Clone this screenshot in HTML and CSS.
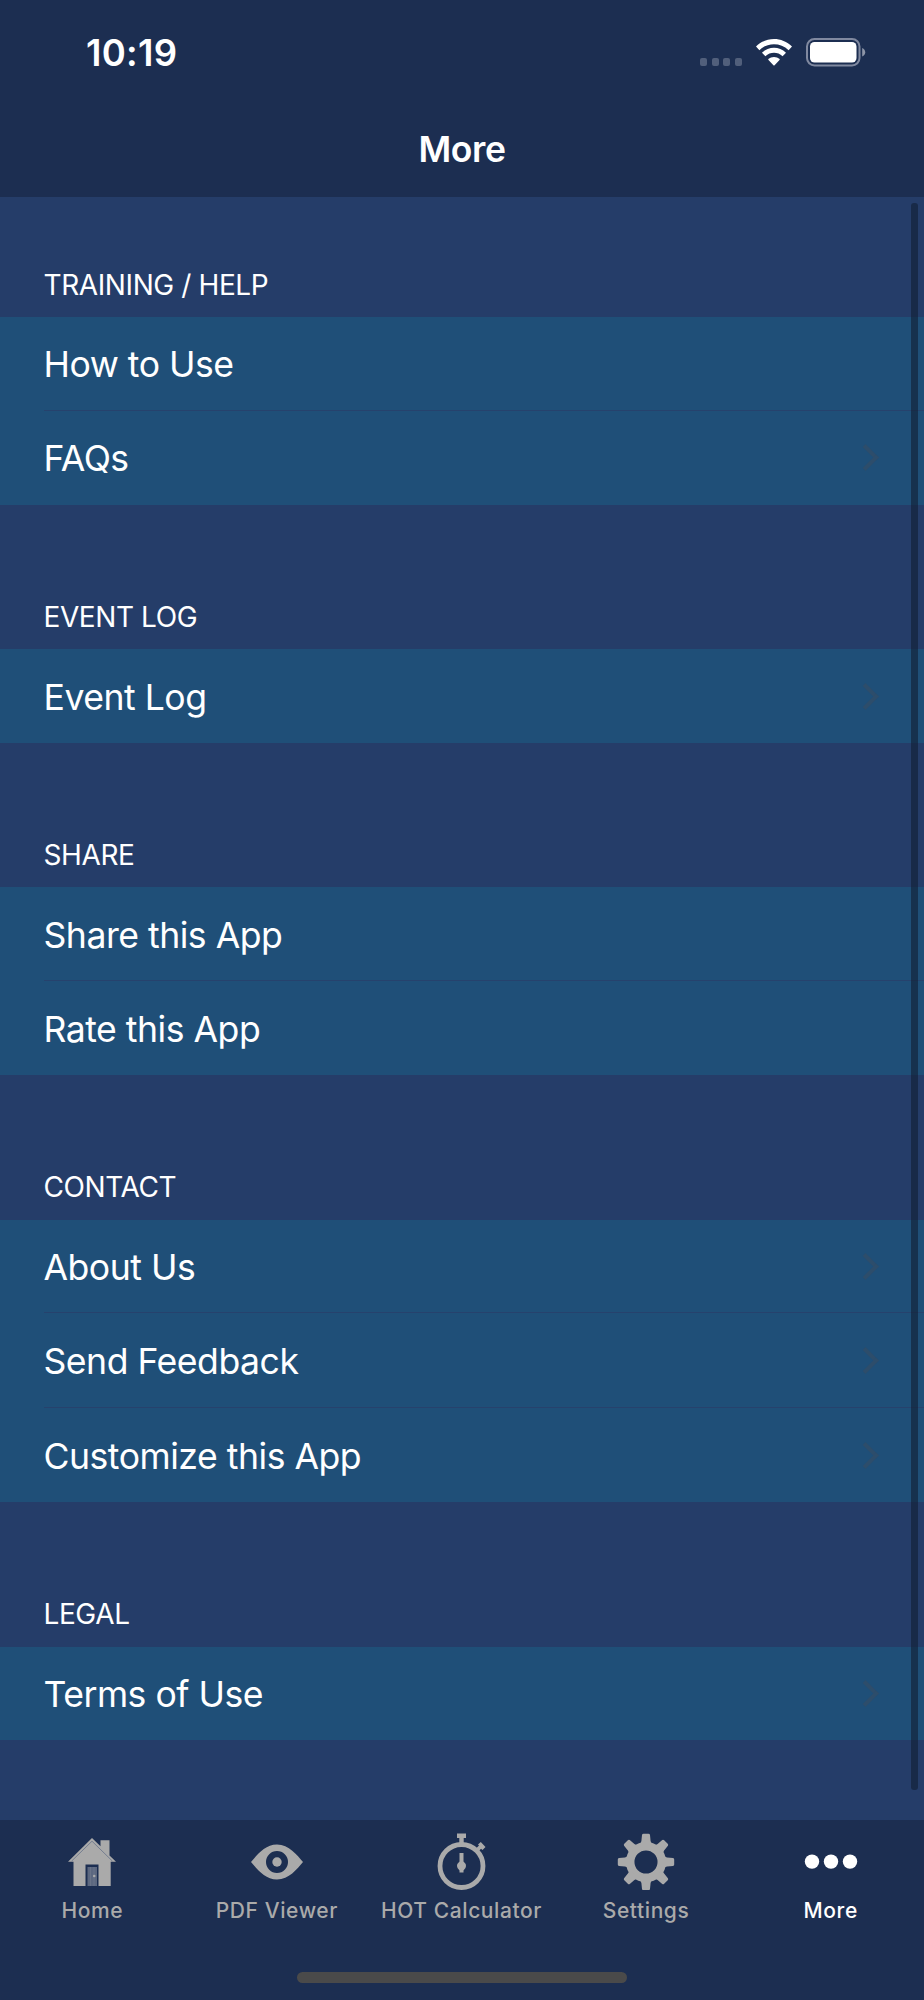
FILE: index.html
```html
<!DOCTYPE html>
<html lang="en">
<head>
  <meta charset="UTF-8">
  <title>More</title>
  <link rel="stylesheet" href="styles.css">
</head>
<body>
  <div class="screen">
    <header class="top">
      <div class="status-bar">
        <span class="time">10:19</span>
        <div class="status-icons">
          <div class="signal"><i></i><i></i><i></i><i></i></div>
          <svg class="wifi" width="36" height="27" viewBox="0 0 36 27" fill="#fff">
            <path d="M0 7.6C10 -2.5 26 -2.5 36 7.6L32.6 11.2C24.5 3.4 11.5 3.4 3.4 11.2Z"/>
            <path d="M6 13.7C12.8 7.2 23.2 7.2 30 13.7L26.6 17.2C21.7 12.7 14.3 12.7 9.4 17.2Z"/>
            <path d="M12.3 20.1C15.5 17.3 20.5 17.3 23.7 20.1Q23.9 20.6 23.5 21L18.6 26.2Q18 26.8 17.4 26.2L12.5 21Q12.1 20.6 12.3 20.1Z"/>
          </svg>
          <svg class="battery" width="60" height="29" viewBox="0 0 60 29">
            <rect x="1" y="1" width="52.5" height="26.5" rx="7.5" fill="none" stroke="#8089a0" stroke-width="2"/>
            <rect x="4" y="4" width="46.5" height="20.5" rx="4.5" fill="#fff"/>
            <path d="M56.2 10Q59.2 11.3 59.2 14.3T56.2 18.6Z" fill="#8e96a8"/>
          </svg>
        </div>
      </div>
      <h1>More</h1>
    </header>

    <main class="content">
      <section>
        <h2>TRAINING / HELP</h2>
        <ul>
          <li>How to Use</li>
          <li class="link">FAQs</li>
        </ul>
      </section>
      <section>
        <h2>EVENT LOG</h2>
        <ul>
          <li class="link">Event Log</li>
        </ul>
      </section>
      <section>
        <h2>SHARE</h2>
        <ul>
          <li>Share this App</li>
          <li>Rate this App</li>
        </ul>
      </section>
      <section>
        <h2>CONTACT</h2>
        <ul>
          <li class="link">About Us</li>
          <li class="link">Send Feedback</li>
          <li class="link">Customize this App</li>
        </ul>
      </section>
      <section>
        <h2>LEGAL</h2>
        <ul>
          <li class="link">Terms of Use</li>
        </ul>
      </section>
      <div class="scrollbar"></div>
    </main>

    <nav class="tabs">
      <a class="tab">
        <svg width="60" height="60" viewBox="0 0 60 60">
          <path d="M6 31.8L30 8L38.5 16.3V10.2H47.5V25.500L54 31.800H48.700V56H36.500V34.500H23.500V56H11.500V31.800Z" fill="#aaa"/>
          <path d="M9.5 31.2L30 11.2L50.5 31.2" fill="none" stroke="#757e90" stroke-width="1"/>
          <rect x="25.5" y="37" width="9.5" height="19" fill="#5c6880"/>
          <path d="M28.500 37V56M32 37V56" stroke="#6c768a" stroke-width=".8"/>
          <circle cx="32.2" cy="46" r="1.3" fill="#aaa"/>
        </svg>
        <span>Home</span>
      </a>
      <a class="tab">
        <svg width="60" height="60" viewBox="0 0 60 60">
          <path fill="#aaa" fill-rule="evenodd" d="M4 32C10 25 18 14.5 30 14.5S50 25 56 32C50 39 42 49.5 30 49.5S10 39 4 32ZM30 21a11 11 0 1 0 0 22a11 11 0 1 0 0-22Z"/>
          <circle cx="30" cy="32" r="4.7" fill="#aaa"/>
        </svg>
        <span>PDF Viewer</span>
      </a>
      <a class="tab">
        <svg width="60" height="60" viewBox="0 0 60 60">
          <circle cx="30.5" cy="36" r="21.5" fill="none" stroke="#aaa" stroke-width="4.8"/>
          <path fill="#aaa" d="M26 3.5H35V8H32.7V14H28.3V8H26ZM44.500 19L48 15.500L47 14.500L49.800 12L54.500 17L51.500 20L50 18.700L46.500 22.500ZM28.500 23H32.500V31.500Q35 33.500 35 36T32.500 40.500V42.500H28.500V40.500Q26 38.500 26 36T28.500 31.500Z"/>
        </svg>
        <span>HOT Calculator</span>
      </a>
      <a class="tab">
        <svg width="60" height="60" viewBox="0 0 60 60">
          <circle cx="30" cy="32" r="15.8" fill="none" stroke="#aaa" stroke-width="8.5"/>
          <g fill="#aaa">
            <path id="tooth" d="M23 14.5Q25 13.5 25.4 11L26 5Q26.2 3.8 27.5 3.8H32.5Q33.8 3.8 34 5L34.6 11Q35 13.5 37 14.5Z"/>
            <use href="#tooth" transform="rotate(45 30 32)"/>
            <use href="#tooth" transform="rotate(90 30 32)"/>
            <use href="#tooth" transform="rotate(135 30 32)"/>
            <use href="#tooth" transform="rotate(180 30 32)"/>
            <use href="#tooth" transform="rotate(225 30 32)"/>
            <use href="#tooth" transform="rotate(270 30 32)"/>
            <use href="#tooth" transform="rotate(315 30 32)"/>
          </g>
        </svg>
        <span>Settings</span>
      </a>
      <a class="tab active">
        <svg width="60" height="60" viewBox="0 0 60 60" fill="#fff">
          <circle cx="11" cy="31.6" r="7.2"/>
          <circle cx="30" cy="31.6" r="7.2"/>
          <circle cx="49" cy="31.6" r="7.2"/>
        </svg>
        <span>More</span>
      </a>
    </nav>
    <div class="home-indicator"></div>
  </div>
</body>
</html>
```
FILE: styles.css
```css
body {
  margin: 0;
  font-family: Inter, "Liberation Sans", sans-serif;
  background: #1c2e51;
  color: #fff;
}

.screen {
  width: 924px;
  height: 2000px;
  display: flex;
  flex-direction: column;
  overflow: hidden;
  background: #1c2e51;
}

.top {
  height: 197px;
  flex: none;
}

.status-bar {
  height: 104px;
  display: flex;
  justify-content: space-between;
  padding: 0 58px 0 86px;
}

.time {
  font-size: 36.5px;
  font-weight: 600;
  line-height: 44px;
  margin-top: 31px;
  letter-spacing: 0.3px;
}

.status-icons {
  display: flex;
  align-items: flex-start;
  padding-top: 38px;
}

.signal {
  display: flex;
  gap: 4.6px;
  margin: 20px 14px 0 0;
}

.signal i {
  width: 7px;
  height: 8px;
  border-radius: 2px;
  background: #515f7b;
}

.wifi {
  margin: 1px 14px 0 0;
}

h1 {
  margin: 24px 0 0;
  font-size: 35.5px;
  font-weight: 600;
  line-height: 44px;
  text-align: center;
  letter-spacing: -0.4px;
}

.content {
  position: relative;
  height: 1623px;
  flex: none;
  background: #253d69;
}

section h2 {
  box-sizing: border-box;
  height: 144.1px;
  margin: 0;
  padding: 94px 0 0 43.5px;
  font-size: 28px;
  font-weight: 400;
  line-height: 36px;
  letter-spacing: -0.4px;
}

section:first-child h2 {
  height: 120px;
  padding-top: 70px;
}

ul {
  margin: 0;
  padding: 0;
  list-style: none;
  background: #1f4f78;
}

li {
  position: relative;
  display: flex;
  align-items: center;
  justify-content: space-between;
  box-sizing: border-box;
  height: 93.7px;
  padding: 2px 46px 0 43.5px;
  font-size: 35.6px;
  letter-spacing: -0.48px;
}

li + li {
  height: 94.6px;
}

li + li::before {
  content: "";
  position: absolute;
  top: -1px;
  left: 43.5px;
  right: 0;
  height: 1px;
  background: #26426d;
}

.link::after {
  content: "";
  width: 15px;
  height: 15px;
  margin: -2px 3px 0 0;
  border: solid #2d4d6b;
  border-width: 4px 4px 0 0;
  transform: rotate(45deg);
}

.scrollbar {
  position: absolute;
  top: 6px;
  right: 6px;
  width: 7px;
  height: 1587px;
  border-radius: 3px;
  background: rgba(16, 30, 50, 0.6);
}

.tabs {
  display: flex;
  height: 151px;
  flex: none;
  padding: 10px 1px 0 0;
  box-sizing: border-box;
}

.tab {
  flex: 1;
  display: flex;
  flex-direction: column;
  align-items: center;
  color: #aaa;
  font-size: 21px;
  font-weight: 500;
  line-height: 28px;
  letter-spacing: 0.6px;
  white-space: nowrap;
}

.tab span {
  margin-top: 7px;
}

.tab.active {
  color: #fff;
}

.home-indicator {
  width: 330px;
  height: 11px;
  margin: 1px auto 0;
  border-radius: 6px;
  background: #4a4a4a;
}
```
